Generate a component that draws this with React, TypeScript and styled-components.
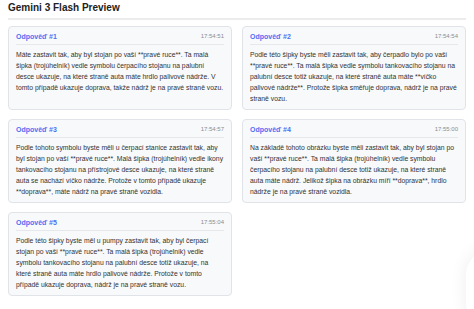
import React from "react";
import styled, { createGlobalStyle } from "styled-components";

const GlobalStyle = createGlobalStyle`
  html, body {
    margin: 0;
    padding: 0;
    background: #ffffff;
  }
  body {
    font-family: "Liberation Sans", Arial, sans-serif;
    color: #333333;
  }
`;

const Page = styled.div`
  padding: 2px 8px 8px;
`;

const Title = styled.h2`
  margin: 0;
  font-size: 10px;
  line-height: 12px;
  font-weight: 700;
  color: #222222;
  padding-bottom: 4px;
  border-bottom: 2px solid #ececec;
`;

const Grid = styled.div`
  margin-top: 6px;
  display: grid;
  grid-template-columns: 1fr 1fr;
  column-gap: 10px;
  row-gap: 9px;
`;

const Card = styled.div`
  background: #f8f9fb;
  border: 1px solid #e0e3e8;
  border-radius: 4px;
  padding: 5px 7px 5px;
`;

const CardHeader = styled.div`
  display: flex;
  justify-content: space-between;
  align-items: center;
  height: 8px;
  padding-bottom: 4px;
  border-bottom: 1px solid #e6e8ec;
  margin-bottom: 4px;
`;

const Label = styled.span`
  font-size: 7px;
  font-weight: 700;
  color: #4f6ef2;
`;

const Time = styled.span`
  font-size: 6px;
  color: #8c8c8c;
`;

const Body = styled.p`
  margin: 0;
  font-size: 6.81px;
  line-height: 11px;
  color: #333333;
`;

const FloatShadow = styled.div`
  position: fixed;
  right: -44px;
  bottom: -20px;
  width: 52px;
  height: 80px;
  border-radius: 26px;
  background: #ffffff;
  box-shadow: 0 0 18px rgba(0, 0, 0, 0.07);
`;

const answers = [
  {
    n: 1,
    t: "17:54:51",
    text: "Máte zastavit tak, aby byl stojan po vaší **pravé ruce**. Ta malá šipka (trojúhelník) vedle symbolu čerpacího stojanu na palubní desce ukazuje, na které straně auta máte hrdlo palivové nádrže. V tomto případě ukazuje doprava, takže nádrž je na pravé straně vozu.",
  },
  {
    n: 2,
    t: "17:54:54",
    text: "Podle této šipky byste měli zastavit tak, aby čerpadlo bylo po vaší **pravé ruce**. Ta malá šipka vedle symbolu tankovacího stojanu na palubní desce totiž ukazuje, na které straně auta máte **víčko palivové nádrže**. Protože šipka směřuje doprava, nádrž je na pravé straně vozu.",
  },
  {
    n: 3,
    t: "17:54:57",
    text: "Podle tohoto symbolu byste měli u čerpací stanice zastavit tak, aby byl stojan po vaší **pravé ruce**. Malá šipka (trojúhelník) vedle ikony tankovacího stojanu na přístrojové desce ukazuje, na které straně auta se nachází víčko nádrže. Protože v tomto případě ukazuje **doprava**, máte nádrž na pravé straně vozidla.",
  },
  {
    n: 4,
    t: "17:55:00",
    text: "Na základě tohoto obrázku byste měli zastavit tak, aby byl stojan po vaší **pravé ruce**. Ta malá šipka (trojúhelník) vedle symbolu čerpacího stojanu na palubní desce totiž ukazuje, na které straně auta máte nádrž. Jelikož šipka na obrázku míří **doprava**, hrdlo nádrže je na pravé straně vozidla.",
  },
  {
    n: 5,
    t: "17:55:04",
    text: "Podle této šipky byste měl u pumpy zastavit tak, aby byl čerpací stojan po vaší **pravé ruce**. Ta malá šipka (trojúhelník) vedle symbolu tankovacího stojanu na palubní desce totiž ukazuje, na které straně auta máte hrdlo palivové nádrže. Protože v tomto případě ukazuje doprava, nádrž je na pravé straně vozu.",
  },
];

export default function App() {
  return (
    <>
      <GlobalStyle />
      <Page>
        <Title>Gemini 3 Flash Preview</Title>
        <Grid>
          {answers.map((a) => (
            <Card key={a.n}>
              <CardHeader>
                <Label>Odpověď #{a.n}</Label>
                <Time>{a.t}</Time>
              </CardHeader>
              <Body>{a.text}</Body>
            </Card>
          ))}
        </Grid>
      </Page>
      <FloatShadow />
    </>
  );
}
